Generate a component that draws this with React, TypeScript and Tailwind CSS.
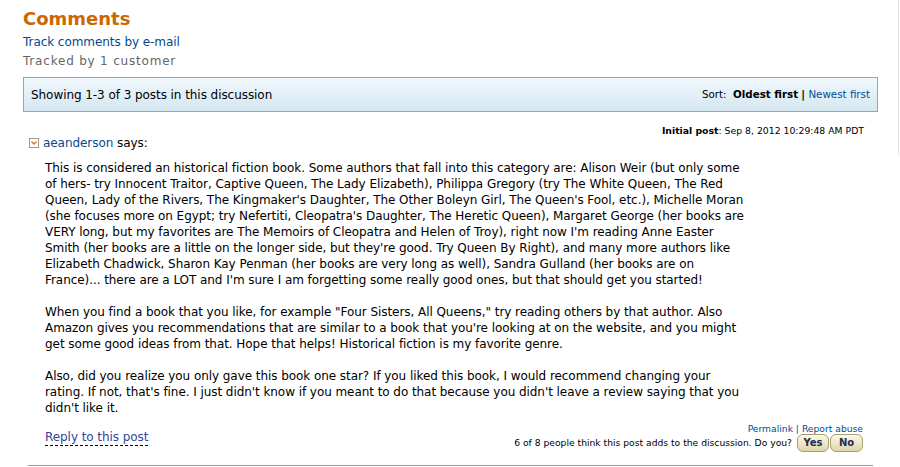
import React from "react";

const lines1 = [
  "This is considered an historical fiction book. Some authors that fall into this category are: Alison Weir (but only some",
  "of hers- try Innocent Traitor, Captive Queen, The Lady Elizabeth), Philippa Gregory (try The White Queen, The Red",
  "Queen, Lady of the Rivers, The Kingmaker's Daughter, The Other Boleyn Girl, The Queen's Fool, etc.), Michelle Moran",
  "(she focuses more on Egypt; try Nefertiti, Cleopatra's Daughter, The Heretic Queen), Margaret George (her books are",
  "VERY long, but my favorites are The Memoirs of Cleopatra and Helen of Troy), right now I'm reading Anne Easter",
  "Smith (her books are a little on the longer side, but they're good. Try Queen By Right), and many more authors like",
  "Elizabeth Chadwick, Sharon Kay Penman (her books are very long as well), Sandra Gulland (her books are on",
  "France)... there are a LOT and I'm sure I am forgetting some really good ones, but that should get you started!",
];

const lines2 = [
  "When you find a book that you like, for example \"Four Sisters, All Queens,\" try reading others by that author. Also",
  "Amazon gives you recommendations that are similar to a book that you're looking at on the website, and you might",
  "get some good ideas from that. Hope that helps! Historical fiction is my favorite genre.",
];

const lines3 = [
  "Also, did you realize you only gave this book one star? If you liked this book, I would recommend changing your",
  "rating. If not, that's fine. I just didn't know if you meant to do that because you didn't leave a review saying that you",
  "didn't like it.",
];

function Para({ lines, last }: { lines: string[]; last?: boolean }) {
  return (
    <div className={last ? "" : "mb-[16px]"}>
      {lines.map((l, i) => (
        <div key={i} className="whitespace-nowrap">
          {l}
        </div>
      ))}
    </div>
  );
}

function VoteButton({ label, wide }: { label: string; wide?: boolean }) {
  return (
    <button
      className={
        (wide ? "w-[33px] " : "w-[32px] ") +
        "h-[18px] rounded-[6px] border border-[#a49f72] bg-gradient-to-b from-[#fcf9e8] to-[#dcd6aa] text-[10px] font-bold leading-none text-[#1e2a52]"
      }
    >
      {label}
    </button>
  );
}

export default function App() {
  return (
    <div className="relative h-[467px] w-[900px] overflow-hidden bg-white font-['DejaVu_Sans',Verdana,sans-serif] text-[12px] tracking-[-0.06px] text-black">
      {/* faint edge of the side column */}
      <div className="absolute right-[1px] top-0 h-[155px] w-px bg-[#dbe6ee]" />

      <div className="pl-[23px] pr-[22px]">
        <div className="pt-[8px] text-[18px] font-bold leading-[22px] tracking-normal text-[#cc6600]">
          Comments
        </div>
        <div className="mt-[4px] leading-[17px] text-[#004b91]">
          Track comments by e-mail
        </div>
        <div className="mt-[2px] leading-[17px] tracking-[0.8px] text-[#666666]">
          Tracked by 1 customer
        </div>

        <div className="mt-[7px] flex h-[35px] items-center justify-between border border-[#7eaecb] bg-gradient-to-b from-[#f0f8fc] to-[#d5e7f1] pl-[7px] pr-[7px]">
          <span>Showing 1-3 of 3 posts in this discussion</span>
          <span className="text-[10.3px] tracking-normal">
            Sort:&nbsp; <b>Oldest first</b> <b>|</b>{" "}
            <span className="text-[#004b91]">Newest first</span>
          </span>
        </div>

        <div className="mt-[13px] pr-[14px] text-right text-[9.3px] leading-[12px] tracking-normal">
          <b>Initial post</b>: Sep 8, 2012 10:29:48 AM PDT
        </div>

        <div className="mt-[-2px] flex items-center pl-[6px] leading-[16px]">
          <span className="mr-[4px] flex h-[10px] w-[10px] items-center justify-center border border-[#9b9a8c] bg-white">
            <svg width="8" height="8" viewBox="0 0 8 8">
              <path d="M1.5 2.5 L4 5 L6.5 2.5" stroke="#d97a10" strokeWidth="1.4" fill="none" />
            </svg>
          </span>
          <span className="text-[#004b91]">aeanderson</span>
          <span>&nbsp;says:</span>
        </div>

        <div className="mt-[9px] pl-[22px] leading-[16px]">
          <Para lines={lines1} />
          <Para lines={lines2} />
          <Para lines={lines3} last />
        </div>

        <div className="mt-[8px] flex items-end justify-between pl-[22px] pr-[15px]">
          <span className="mb-[6px] border-b border-dashed border-black leading-[15px] text-[#36439a]">
            Reply to this post
          </span>
          <div className="flex flex-col items-end text-[9.2px] tracking-normal">
            <div className="leading-[10px] text-[#004b91]">
              Permalink | Report abuse
            </div>
            <div className="flex items-center gap-[1px]">
              <span className="mr-[4px]">
                6 of 8 people think this post adds to the discussion. Do you?
              </span>
              <VoteButton label="Yes" />
              <VoteButton label="No" wide />
            </div>
          </div>
        </div>

        <div className="ml-[5px] mr-[5px] mt-[13px] h-px bg-[#999999]" />
      </div>
    </div>
  );
}
